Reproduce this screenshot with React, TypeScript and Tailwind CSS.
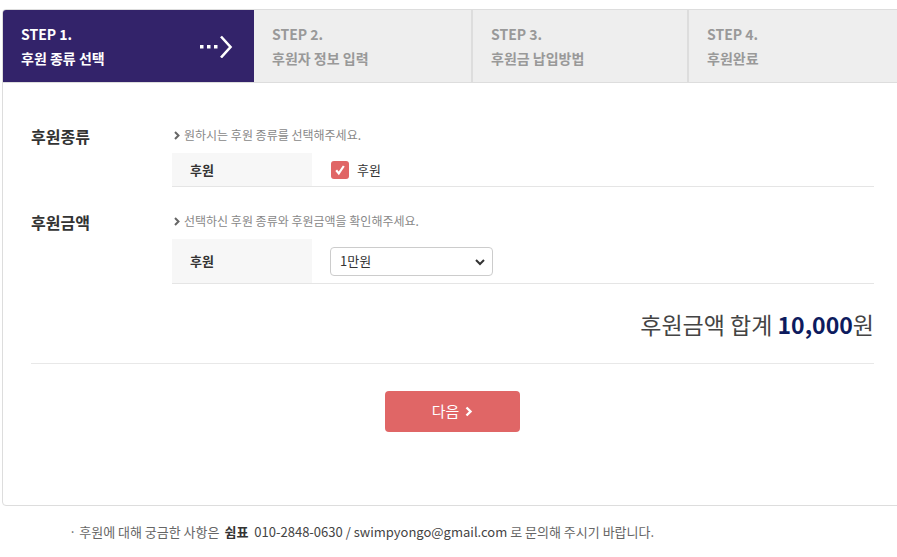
import React from 'react';

const font = { fontFamily: '"Noto Sans CJK KR", "Noto Sans", sans-serif' };

const steps = [
  { no: 'STEP 2.', title: '후원자 정보 입력', w: 'w-[217px]' },
  { no: 'STEP 3.', title: '후원금 납입방법', w: 'w-[216px]' },
  { no: 'STEP 4.', title: '후원완료', w: 'flex-1' },
];

const Hint = ({ text }: { text: string }) => (
  <div className="flex items-center gap-[4px] h-[18px] text-[12px] leading-[18px] text-[#888]">
    <svg width="6" height="9" viewBox="0 0 6 9" className="ml-[2px]">
      <path d="M1 1l3.5 3.5L1 8" stroke="#666" strokeWidth="2" fill="none" />
    </svg>
    <span>{text}</span>
  </div>
);

const App: React.FC = () => {
  return (
    <div className="w-[897px] h-[557px] overflow-hidden bg-white" style={font}>
      <div className="ml-[2px] mt-[9px] w-[901px] h-[497px] border border-[#dddddd] rounded-[4px] overflow-hidden">
        {/* 단계 표시 */}
        <div className="flex h-[73px] border-b border-[#dddddd]">
          <div className="w-[251px] bg-[#33236a] pl-[18px] pt-[12px] flex items-start justify-between pr-[21px]">
            <div className="text-white text-[14px] font-bold leading-6">
              <div>STEP 1.</div>
              <div>후원 종류 선택</div>
            </div>
            <svg width="33" height="24" viewBox="0 0 33 24" className="mt-[12px]">
              <rect x="0" y="11" width="3.5" height="3.5" fill="#fff" />
              <rect x="7" y="11" width="3.5" height="3.5" fill="#fff" />
              <rect x="14" y="11" width="3.5" height="3.5" fill="#fff" />
              <path d="M21 2.5l9.5 10.5L21 23.5" stroke="#fff" strokeWidth="2.6" fill="none" />
            </svg>
          </div>
          {steps.map((s, i) => (
            <div
              key={s.no}
              className={`${s.w} bg-[#eeeeee] pl-[18px] pt-[12px] text-[14px] font-bold leading-6 text-[#999] ${i > 0 ? 'border-l-2 border-[#dddddd]' : ''}`}
            >
              <div>{s.no}</div>
              <div>{s.title}</div>
            </div>
          ))}
        </div>

        {/* 내용 */}
        <div className="px-[28px] pt-[43px]">
          <div className="flex">
            <div className="w-[141px] text-[16px] font-bold leading-[20px] text-[#333]">후원종류</div>
            <div className="flex-1">
              <Hint text="원하시는 후원 종류를 선택해주세요." />
              <div className="mt-[9px] flex h-[34px] border-b border-[#e5e5e5]">
                <div className="w-[140px] bg-[#f7f7f7] pl-[18px] flex items-center text-[13px] font-bold text-[#333]">후원</div>
                <div className="pl-[19px] flex items-center gap-[8px] text-[13px] text-[#333]">
                  <span className="w-[18px] h-[18px] rounded-[3px] bg-[#e06666] flex items-center justify-center">
                    <svg width="12" height="12" viewBox="0 0 12 12">
                      <path d="M2.2 6.2l2.6 3.2L9.8 2" stroke="#fff" strokeWidth="2.2" fill="none" />
                    </svg>
                  </span>
                  <span>후원</span>
                </div>
              </div>
            </div>
          </div>

          <div className="flex mt-[25px]">
            <div className="w-[141px] text-[16px] font-bold leading-[20px] text-[#333]">후원금액</div>
            <div className="flex-1">
              <Hint text="선택하신 후원 종류와 후원금액을 확인해주세요." />
              <div className="mt-[9px] flex h-[45px] border-b border-[#e5e5e5]">
                <div className="w-[140px] bg-[#f7f7f7] pl-[18px] flex items-center text-[13px] font-bold text-[#333]">후원</div>
                <div className="pl-[18px] flex items-center">
                  <div className="relative w-[163px] h-[29px] border border-[#cccccc] rounded-[4px] flex items-center pl-[9px] text-[13px] text-[#333]">
                    <span>1만원</span>
                    <svg width="10" height="7" viewBox="0 0 10 7" className="absolute right-[7px] top-[11px]">
                      <path d="M1 1l4 4 4-4" stroke="#333" strokeWidth="2" fill="none" />
                    </svg>
                  </div>
                </div>
              </div>
            </div>
          </div>

          <div className="mt-[26px] text-right text-[23px] leading-[28px] text-[#444]">
            후원금액 합계 <span className="font-semibold text-[#0d1b5e]">10,000</span>원
          </div>

          <div className="mt-[25px] border-t border-[#e8e8e8]" />

          <div className="mt-[27px] flex justify-center">
            <button className="w-[135px] h-[41px] rounded-[4px] bg-[#e06666] text-white text-[15px] flex items-center justify-center gap-[6px]">
              <span>다음</span>
              <svg width="8" height="11" viewBox="0 0 8 11">
                <path d="M1.5 1.5l4 4-4 4" stroke="#fff" strokeWidth="2.4" fill="none" />
              </svg>
            </button>
          </div>
        </div>
      </div>

      {/* 하단 안내 */}
      <div className="mt-[17px] pl-[69px] text-[13px] leading-[18px] text-[#666]">
        · 후원에 대해 궁금한 사항은 <b className="text-[#333] ml-[2px]">쉼표</b>
        <span className="text-[13px] text-[#444] ml-[6px]">010-2848-0630 / swimpyongo@gmail.com</span> 로 문의해 주시기 바랍니다.
      </div>
    </div>
  );
};

export default App;
